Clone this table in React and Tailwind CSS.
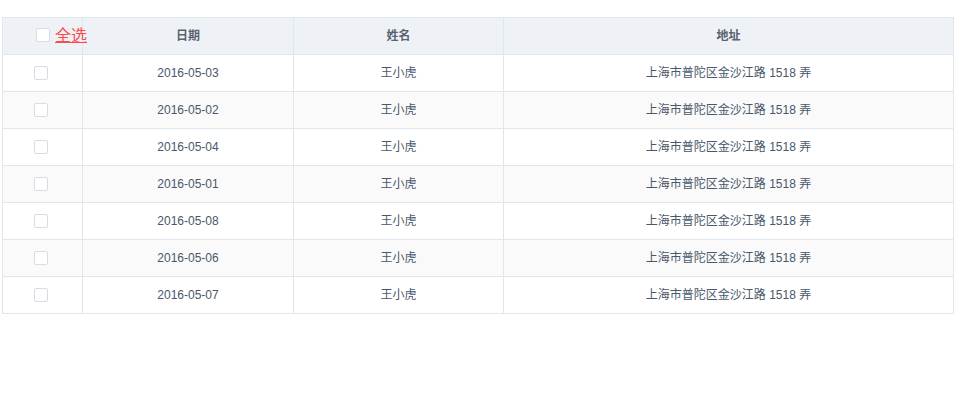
import React, { useState } from 'react';

const rows = [
  { date: '2016-05-03', name: '王小虎', address: '上海市普陀区金沙江路 1518 弄' },
  { date: '2016-05-02', name: '王小虎', address: '上海市普陀区金沙江路 1518 弄' },
  { date: '2016-05-04', name: '王小虎', address: '上海市普陀区金沙江路 1518 弄' },
  { date: '2016-05-01', name: '王小虎', address: '上海市普陀区金沙江路 1518 弄' },
  { date: '2016-05-08', name: '王小虎', address: '上海市普陀区金沙江路 1518 弄' },
  { date: '2016-05-06', name: '王小虎', address: '上海市普陀区金沙江路 1518 弄' },
  { date: '2016-05-07', name: '王小虎', address: '上海市普陀区金沙江路 1518 弄' },
];

const Checkbox = ({ checked, onChange }) => (
  <span
    onClick={onChange}
    className={`inline-block w-[14px] h-[14px] rounded-[2px] border align-middle cursor-pointer ${
      checked ? 'bg-[#20a0ff] border-[#20a0ff]' : 'bg-white border-[#d8dce5]'
    }`}
  />
);

const App = () => {
  const [selected, setSelected] = useState([]);
  const allChecked = selected.length === rows.length;

  const toggleAll = () => setSelected(allChecked ? [] : rows.map((_, i) => i));
  const toggle = (i) =>
    setSelected(selected.includes(i) ? selected.filter((s) => s !== i) : [...selected, i]);

  return (
    <div className="w-[967px] h-[398px] bg-white pt-[17px] pl-[2px] font-['Liberation_Sans','Noto_Sans_CJK_SC',sans-serif]">
      <table className="w-[952px] border-collapse table-fixed text-[12px] text-[#48576a]">
        <colgroup>
          <col className="w-[80px]" />
          <col className="w-[211px]" />
          <col className="w-[210px]" />
          <col />
        </colgroup>
        <thead>
          <tr className="h-[37px] bg-[#eef1f6]">
            <th className="border border-[#dfe6ec] p-0 text-left font-normal overflow-visible whitespace-nowrap">
              <span className="relative z-10 inline-flex items-center gap-[5px] pl-[33px] translate-y-[1px]">
                <Checkbox checked={allChecked} onChange={toggleAll} />
                <span className="text-[16px] text-[#ff4949] underline leading-[16px] translate-y-[1px]">全选</span>
              </span>
            </th>
            <th className="border border-[#dfe6ec] font-bold text-[#5a6270]">日期</th>
            <th className="border border-[#dfe6ec] font-bold text-[#5a6270]">姓名</th>
            <th className="border border-[#dfe6ec] font-bold text-[#5a6270]">地址</th>
          </tr>
        </thead>
        <tbody>
          {rows.map((row, i) => (
            <tr key={i} className={`h-[37px] ${i % 2 === 1 ? 'bg-[#fafafa]' : 'bg-white'}`}>
              <td className="border border-[#dfe6ec] text-center">
                <span className="inline-block ml-[-3px] -translate-y-[1px]">
                  <Checkbox checked={selected.includes(i)} onChange={() => toggle(i)} />
                </span>
              </td>
              <td className="border border-[#dfe6ec] text-center">{row.date}</td>
              <td className="border border-[#dfe6ec] text-center">{row.name}</td>
              <td className="border border-[#dfe6ec] text-center">{row.address}</td>
            </tr>
          ))}
        </tbody>
      </table>
    </div>
  );
};

export default App;
